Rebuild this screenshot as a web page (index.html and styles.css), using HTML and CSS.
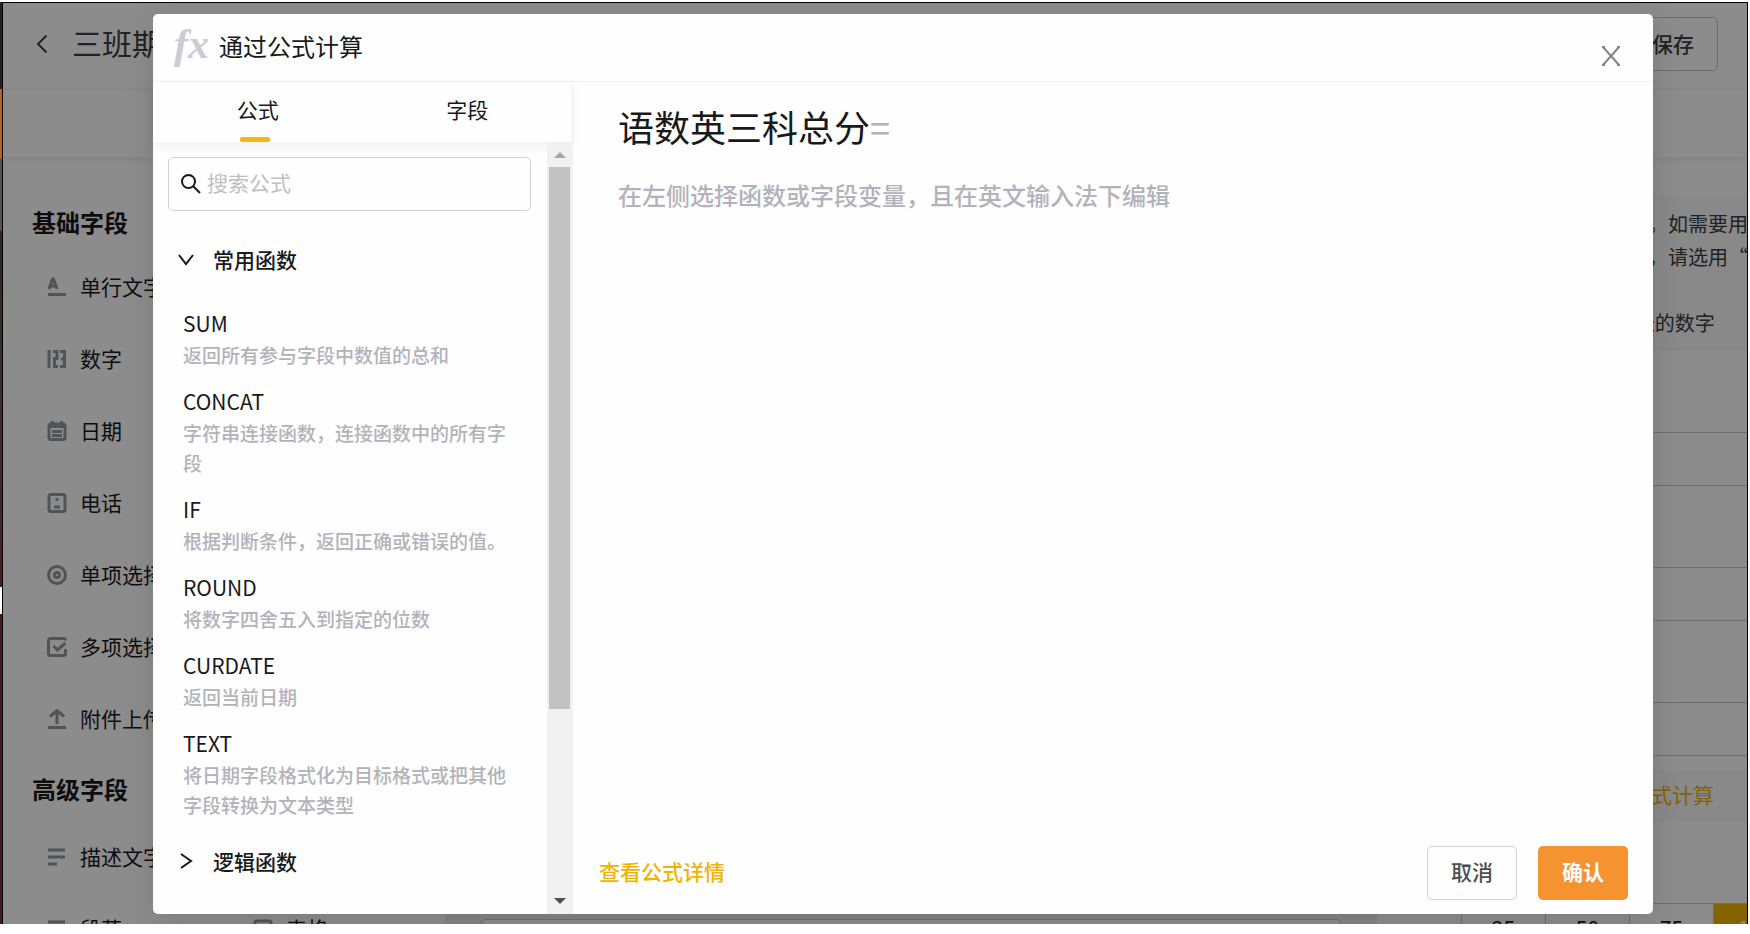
FILE: index.html
```
<!DOCTYPE html>
<html lang="zh-CN">
<head>
    <meta charset="UTF-8">
    <title>通过公式计算</title>
    <link rel="stylesheet" href="styles.css">
</head>
<body>
    <div class="edge"></div>
    <div class="window">
        <!-- 表单编辑页 -->
        <div class="page">
            <header class="topbar">
                <button class="back" aria-label="返回">
                    <svg width="12" height="20" viewBox="0 0 12 20"><path d="M10.500 1.500L2 10l8.500 8.500"/></svg>
                </button>
                <h1>三班期末成绩</h1>
                <button class="save">保存</button>
            </header>
            <div class="subbar"></div>
            <div class="main">
                <nav class="sidebar">
                    <h2>基础字段</h2>
                    <ul class="fields">
                        <li><svg viewBox="0 0 20 20"><path d="M2 12L5.500 2h1L10 12M3.500 9h5"/><path d="M1 17.500h18"/></svg>单行文字</li>
                        <li><svg viewBox="0 0 20 20"><path d="M2 1v18M6 2.500h4v7H7.500v8H11M13 2.500h4.500v15H13M14 10h4"/></svg>数字</li>
                        <li><svg viewBox="0 0 20 20"><rect x="2" y="3" width="16" height="15.500" rx="2"/><path d="M2 5.500h16M5 10.500h10M5 14.500h10M5.500 0v3M14.500 0v3"/></svg>日期</li>
                        <li><svg viewBox="0 0 20 20"><rect x="2" y="1.500" width="16" height="17" rx="2"/><path d="M8.500 6.500h3M7 14h6"/></svg>电话</li>
                        <li><svg viewBox="0 0 20 20"><circle cx="10" cy="10" r="8.500"/><circle cx="10" cy="10" r="2.500"/></svg>单项选择</li>
                        <li><svg viewBox="0 0 20 20"><path d="M18.500 12v4.500a2 2 0 0 1-2 2h-13a2 2 0 0 1-2-2v-13a2 2 0 0 1 2-2h13a2 2 0 0 1 2 2M6.500 9l4 4 8-7"/></svg>多项选择</li>
                        <li><svg viewBox="0 0 20 20"><path d="M1 18.500h18M10 15V2M3 7.500l7-6 7 6"/></svg>附件上传</li>
                    </ul>
                    <h2>高级字段</h2>
                    <ul class="fields">
                        <li class="advanced"><svg viewBox="0 0 20 20"><path d="M1 3h17M1 10h17M1 17h9"/></svg>描述文字</li>
                        <li class="pair">
                            <span><svg viewBox="0 0 20 20"><path d="M1 3h17M1 10h17M1 17h9"/></svg>段落</span>
                            <span><svg viewBox="0 0 20 20"><rect x="2" y="2" width="16" height="16" rx="2"/><path d="M2 8h16"/></svg>表格</span>
                        </li>
                    </ul>
                </nav>
                <div class="canvas">
                    <div class="canvas-input"></div>
                </div>
                <div class="settings">
                    <div class="note">
                        <p>数字字段只能填写数值。如需要用作</p>
                        <p>手机号码或者身份证号，请选用“电话”</p>
                        <p>&nbsp;</p>
                        <p>一般不建议超过 15位长的数字</p>
                    </div>
                    <div class="boxes">
                        <div class="box"></div>
                        <div class="box"></div>
                        <div class="box"></div>
                    </div>
                    <div class="formula-row"><a href="#">公式计算</a></div>
                    <div class="widths">
                        <button>25</button>
                        <button>50</button>
                        <button>75</button>
                        <button class="on">100</button>
                    </div>
                </div>
            </div>
        </div>

        <!-- 公式弹窗 -->
        <div class="mask">
            <div class="modal" role="dialog" aria-labelledby="modal-title">
                <div class="modal-header">
                    <span class="fx">fx</span>
                    <h2 id="modal-title">通过公式计算</h2>
                    <button class="close" aria-label="关闭">
                        <svg width="20" height="20" viewBox="0 0 20 20"><path d="M2 1L18 19M18 1L2 19M1 1h3M16 1h3M1 19h3M16 19h3"/></svg>
                    </button>
                </div>
                <div class="modal-body">
                    <aside class="picker">
                        <div class="tabs">
                            <button class="tab active">公式</button>
                            <button class="tab">字段</button>
                        </div>
                        <div class="picker-body">
                            <div class="functions">
                                <label class="search">
                                    <svg width="20" height="20" viewBox="0 0 20 20"><circle cx="7.500" cy="7.500" r="6.500"/><path d="M12 12l7 7"/></svg>
                                    <input type="text" placeholder="搜索公式" aria-label="搜索公式">
                                </label>
                                <button class="group">
                                    <svg width="16" height="16" viewBox="0 0 16 16"><path d="M1 4l7 9 7-9"/></svg>常用函数
                                </button>
                                <dl class="list">
                                    <div><dt>SUM</dt><dd>返回所有参与字段中数值的总和</dd></div>
                                    <div><dt>CONCAT</dt><dd>字符串连接函数，连接函数中的所有字段</dd></div>
                                    <div><dt>IF</dt><dd>根据判断条件，返回正确或错误的值。</dd></div>
                                    <div><dt>ROUND</dt><dd>将数字四舍五入到指定的位数</dd></div>
                                    <div><dt>CURDATE</dt><dd>返回当前日期</dd></div>
                                    <div><dt>TEXT</dt><dd>将日期字段格式化为目标格式或把其他字段转换为文本类型</dd></div>
                                </dl>
                                <button class="group">
                                    <svg width="16" height="16" viewBox="0 0 16 16"><path d="M3 1l10 7-10 7"/></svg>逻辑函数
                                </button>
                            </div>
                            <div class="scrollbar">
                                <svg class="up" width="12" height="6" viewBox="0 0 12 6"><path d="M0 6l6-6 6 6z"/></svg>
                                <div class="track"><div class="thumb"></div></div>
                                <svg class="down" width="12" height="6" viewBox="0 0 12 6"><path d="M0 0l6 6 6-6z"/></svg>
                            </div>
                        </div>
                    </aside>
                    <section class="editor">
                        <h3>语数英三科总分<span>=</span></h3>
                        <textarea placeholder="在左侧选择函数或字段变量，且在英文输入法下编辑" aria-label="公式"></textarea>
                        <div class="actions">
                            <a href="#">查看公式详情</a>
                            <button class="cancel">取消</button>
                            <button class="confirm">确认</button>
                        </div>
                    </section>
                </div>
            </div>
        </div>
    </div>
</body>
</html>
```
FILE: styles.css
```
* {
    box-sizing: border-box;
}
body {
    margin: 0;
    height: 100vh;
    padding: 2px 2px 10px 0;
    display: flex;
    overflow: hidden;
    background: #fefefe;
    color: #18191b;
    font-family: "Noto Sans CJK SC", sans-serif;
    font-size: 21px;
}
h1, h2, h3, p, ul, dl, dd {
    margin: 0;
    padding: 0;
}
button, input, textarea {
    font: inherit;
    color: inherit;
    padding: 0;
    border: 0;
    background: none;
}
svg {
    flex: none;
    fill: none;
    stroke: currentColor;
}
a {
    color: #f0b400;
    text-decoration: none;
}

/* 左侧露出的窗口边 */
.edge {
    width: 2px;
    background: linear-gradient(#2c1f22 87px, #b5641f 87px, #b5641f 157px, #55524f 157px, #55524f 229px, #332325 229px, #3f3029 400px, #4a1c22 585px, #fff 585px, #fff 612px, #45181e 612px);
}
.window {
    flex: 1;
    min-width: 0;
    position: relative;
    overflow: hidden;
    border: 1px solid #000;
    border-bottom: 0;
}

/* 表单编辑页 */
.page {
    height: 100%;
    display: flex;
    flex-direction: column;
    background: #fff;
}
.topbar {
    height: 87px;
    flex: none;
    display: flex;
    align-items: center;
    padding: 0 29px 4px 33px;
    border-bottom: 1px solid #f4f4f4;
    color: #3c3e44;
}
.back {
    display: flex;
    margin-right: 24px;
    stroke-width: 2;
}
.topbar h1 {
    padding-bottom: 5px;
    font-size: 30px;
    font-weight: 400;
}
.save {
    width: 90px;
    height: 54px;
    margin-left: auto;
    padding-bottom: 3px;
    border: 1px solid #c6c8cf;
    border-radius: 5px;
    font-weight: 500;
}
.subbar {
    height: 68px;
    flex: none;
    border-bottom: 1px solid #f0f0f0;
    box-shadow: 0 2px 8px rgba(0, 0, 0, 0.06);
}
.main {
    flex: 1;
    min-height: 0;
    display: flex;
}
.sidebar {
    width: 442px;
    flex: none;
    padding: 44px 29px 0;
    overflow: hidden;
}
.sidebar h2 {
    font-size: 24px;
    line-height: 40px;
}
.fields {
    list-style: none;
    padding: 8px 0 15px 15px;
}
.fields li, .pair span {
    display: flex;
    align-items: center;
    height: 72px;
}
.fields svg {
    width: 20px;
    height: 20px;
    margin: 2px 13px 0 0;
    color: #94979c;
    stroke-width: 3;
}
.fields .pair {
    gap: 131px;
}
.fields .advanced {
    margin-top: 3px;
}
.canvas {
    flex: 1;
    display: flex;
    align-items: flex-end;
    padding: 0 36px;
    background: #f0f1f2;
}
.canvas-input {
    flex: 1;
    height: 5px;
    border: 1px solid #c6c8cf;
    border-bottom: 0;
    border-radius: 6px 6px 0 0;
    background: #fff;
}
.settings {
    width: 370px;
    flex: none;
    padding-top: 37px;
    overflow: hidden;
    white-space: nowrap;
}
.note {
    height: 156px;
    padding: 12px 0 0 71px;
    background: #f9f9f9;
    color: #3c3e44;
    font-size: 20px;
    line-height: 33px;
}
.boxes {
    display: flex;
    flex-direction: column;
    gap: 81px;
    padding: 81px 0 14px;
}
.box {
    height: 54px;
    border: 1px solid #c8c8cc;
    border-width: 1px 0;
}
.formula-row {
    padding: 0 33px 3px 0;
    background: #f9f9f9;
    text-align: right;
    line-height: 49px;
}
.widths {
    display: grid;
    grid-template-columns: repeat(4, 84px);
    margin: 81px 0 0 84px;
    border-top: 1px solid #c8c8cc;
}
.widths button {
    height: 54px;
    padding-bottom: 6px;
    border-left: 1px solid #c8c8cc;
}
.widths .on {
    background: #f0b400;
    color: #fff;
}

/* 公式弹窗 */
.mask {
    position: absolute;
    inset: 0;
    display: flex;
    padding: 11px 94px 10px 150px;
    background: rgba(0, 0, 0, 0.45);
}
.modal {
    flex: 1;
    min-width: 0;
    display: flex;
    flex-direction: column;
    border-radius: 5px;
    background: #fefefe;
    box-shadow: 0 6px 30px rgba(0, 0, 0, 0.12);
}
.modal-header {
    height: 68px;
    flex: none;
    display: flex;
    align-items: center;
    padding: 0 32px 4px 21px;
    border-bottom: 1px solid #f2f2f2;
}
.fx {
    width: 45px;
    padding-bottom: 4px;
    color: #cdccd4;
    font: italic bold 42px/44px "Liberation Serif", serif;
}
.modal-header h2 {
    font-size: 24px;
    font-weight: 400;
}
.close {
    display: flex;
    margin: 20px 0 0 auto;
    color: #858585;
    stroke-width: 2;
}
.modal-body {
    flex: 1;
    min-height: 0;
    display: flex;
}
.picker {
    width: 420px;
    flex: none;
    display: flex;
    flex-direction: column;
    border-right: 1px solid #f2f2f2;
}
.tabs {
    display: flex;
    flex: none;
    height: 60px;
    box-shadow: 0 4px 12px rgba(0, 0, 0, 0.06);
}
.tab {
    flex: 1;
    display: flex;
    flex-direction: column;
    align-items: center;
    line-height: 55px;
}
.tab.active::after {
    content: "";
    width: 30px;
    height: 5px;
    margin-right: 6px;
    border-radius: 2px;
    background: #f0b90b;
}
.picker-body {
    flex: 1;
    min-height: 0;
    display: flex;
}
.functions {
    flex: 1;
    padding: 15px 16px 0 15px;
    overflow: hidden;
}
.search {
    display: flex;
    align-items: center;
    gap: 6px;
    height: 54px;
    padding: 0 12px;
    border: 1px solid #cfd2e0;
    border-radius: 5px;
    stroke-width: 2;
}
.search input {
    flex: 1;
    min-width: 0;
    padding-bottom: 4px;
    outline: 0;
}
.search input::placeholder {
    color: #bfbfbf;
}
.group {
    display: flex;
    align-items: center;
    gap: 19px;
    height: 56px;
    padding: 0 0 2px 10px;
    font-weight: 500;
    stroke-width: 2;
}
.search + .group {
    margin-top: 21px;
}
.list {
    padding: 18px 0 0 15px;
}
.list div {
    padding-bottom: 14px;
}
.list dt {
    line-height: 34px;
}
.list dd {
    width: 340px;
    color: #b3b2ba;
    font-size: 19px;
    font-weight: 500;
    line-height: 30px;
}
.scrollbar {
    width: 25px;
    display: flex;
    flex-direction: column;
    align-items: center;
    justify-content: space-between;
    padding: 10px 0;
    background: #f1f1f1;
}
.scrollbar svg {
    stroke: none;
}
.up {
    fill: #a3a3a3;
}
.down {
    fill: #505050;
}
.track {
    flex: 1;
    width: 21px;
    margin: 9px 0;
}
.thumb {
    height: 75%;
    background: #c1c1c1;
}
.editor {
    flex: 1;
    display: flex;
    flex-direction: column;
    padding: 17px 25px 14px 26px;
}
.editor h3 {
    padding-left: 19px;
    font-size: 36px;
    font-weight: 400;
    line-height: 54px;
}
.editor h3 span {
    color: #b3b2ba;
}
.editor textarea {
    flex: 1;
    margin-top: 24px;
    padding-left: 19px;
    resize: none;
    outline: 0;
    font-size: 24px;
    line-height: 36px;
}
.editor textarea::placeholder {
    color: #b3b2ba;
    font-weight: 500;
}
.actions {
    display: flex;
    align-items: center;
    gap: 21px;
}
.actions a {
    margin-right: auto;
    padding-bottom: 4px;
    font-weight: 500;
}
.actions button {
    width: 90px;
    height: 54px;
    padding-bottom: 4px;
    border-radius: 5px;
}
.actions .cancel {
    border: 1px solid #cfd2e0;
    color: #4b4e52;
    font-weight: 500;
}
.actions .confirm {
    background: #f59331;
    color: #fff;
    font-weight: 700;
}
```
